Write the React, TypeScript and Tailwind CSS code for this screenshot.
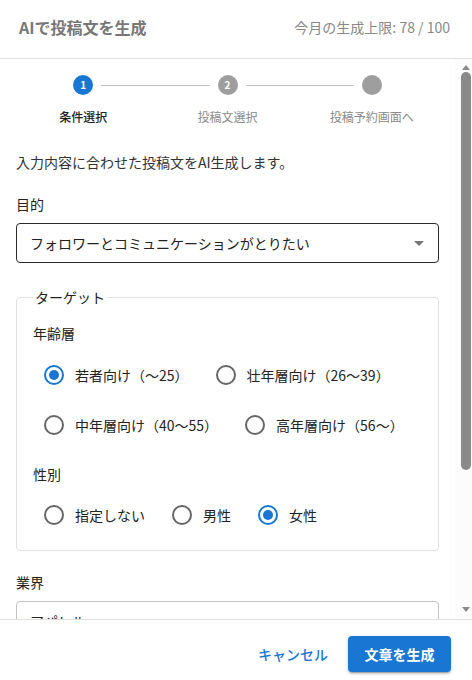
import { ReactNode } from 'react';

const font = "font-['Noto_Sans_CJK_JP','Noto_Sans',sans-serif]";

function ArrowDrop() {
  return (
    <svg width="24" height="24" viewBox="0 0 24 24" className="shrink-0">
      <path d="M7 10l5 5 5-5z" fill="#757575" />
    </svg>
  );
}

function SelectBox({ value, active }: { value: string; active?: boolean }) {
  return (
    <div
      className={`flex h-[40px] items-center justify-between rounded-[4px] border pl-[13px] pr-[7px] ${
        active ? 'border-[#2a2a2a]' : 'border-[#c4c4c4]'
      }`}
    >
      <span className="text-[14px] leading-[20px] text-[#222]">{value}</span>
      <ArrowDrop />
    </div>
  );
}

function Radio({ label, checked }: { label: string; checked?: boolean }) {
  return (
    <label className="mr-[16px] flex h-[42px] items-center">
      <span className="flex p-[9px]">
        <span className="flex h-6 w-6 items-center justify-center">
          <span
            className={`flex h-[20px] w-[20px] items-center justify-center rounded-full border-2 ${
              checked ? 'border-[#1976d2]' : 'border-[#666]'
            }`}
          >
            {checked && <span className="h-[10px] w-[10px] rounded-full bg-[#1976d2]" />}
          </span>
        </span>
      </span>
      <span className="text-[14px] leading-[20px] text-[#222]">{label}</span>
    </label>
  );
}

function FieldLabel({ children, className = '' }: { children: ReactNode; className?: string }) {
  return <div className={`text-[14px] leading-[20px] text-[#222] ${className}`}>{children}</div>;
}

// drawn scrollbar (the headless browser hides native ones)
function ScrollBar() {
  return (
    <div className="flex w-[17px] shrink-0 flex-col items-end bg-[#fcfcfc] pr-px">
      <div className="flex h-[13px] w-[10px] items-end justify-center pb-[2px]">
        <svg width="8" height="5" viewBox="0 0 8 5">
          <path d="M0 5L4 0L8 5Z" fill="#8a8a8a" />
        </svg>
      </div>
      <div className="h-[398px] w-[10px] rounded-full bg-[#8a8a8a]" />
      <div className="flex-1" />
      <div className="flex h-[14px] w-[10px] items-start justify-center pt-[2px]">
        <svg width="8" height="5" viewBox="0 0 8 5">
          <path d="M0 0L8 0L4 5Z" fill="#8a8a8a" />
        </svg>
      </div>
    </div>
  );
}

const steps = [
  { label: '条件選択', num: '1', active: true },
  { label: '投稿文選択', num: '2', active: false },
  { label: '投稿予約画面へ', num: '', active: false },
];

export default function App() {
  return (
    <div className={`flex h-[680px] w-[472px] flex-col bg-white ${font}`}>
      {/* header */}
      <div className="flex h-[59px] shrink-0 items-center justify-between border-b border-[#e0e0e0] pb-[4px] pl-[19px] pr-[22px]">
        <h2 className="text-[16px] font-bold leading-[24px] text-[#777]">AIで投稿文を生成</h2>
        <span className="text-[14px] leading-[20px] text-[#888]">今月の生成上限: 78 / 100</span>
      </div>

      {/* body */}
      <div className="flex min-h-0 flex-1">
        <div className="min-w-0 flex-1 overflow-hidden">
          <div className="grid grid-cols-3 px-[11px] pt-[16px]">
            {steps.map((s, i) => (
              <div key={s.label} className="flex flex-col items-center">
                <div className="flex w-full items-center">
                  <span className={`h-px flex-1 ${i === 0 ? '' : 'bg-[#bdbdbd]'}`} />
                  <span
                    className={`mx-[8px] flex h-[20px] w-[20px] items-center justify-center rounded-full text-[10px] font-bold leading-none text-white ${
                      s.active ? 'bg-[#1976d2]' : 'bg-[#9e9e9e]'
                    }`}
                  >
                    {s.num}
                  </span>
                  <span className={`h-px flex-1 ${i === steps.length - 1 ? '' : 'bg-[#bdbdbd]'}`} />
                </div>
                <span
                  className={`mt-[12px] text-[12px] leading-[20px] ${
                    s.active ? 'font-medium text-[#222]' : 'text-[#8a8a8a]'
                  }`}
                >
                  {s.label}
                </span>
              </div>
            ))}
          </div>

          <div className="px-[16px]">
            <p className="mt-[25px] text-[14px] leading-[20px] text-[#333]">
              入力内容に合わせた投稿文をAI生成します。
            </p>

            <FieldLabel className="mt-[22px]">目的</FieldLabel>
            <div className="mt-[9px]">
              <SelectBox value="フォロワーとコミュニケーションがとりたい" active />
            </div>

            <fieldset className="mt-[24px] rounded-[4px] border border-[#e0e0e0] pb-[14px] pl-[16px] pr-[16px] pt-[16px]">
              <legend className="px-[2px] text-[14px] leading-[20px] text-[#222]">ターゲット</legend>
              <FieldLabel>年齢層</FieldLabel>
              <div className="mt-[11px] flex flex-wrap gap-y-[8px]">
                <Radio label="若者向け（〜25）" checked />
                <Radio label="壮年層向け（26〜39）" />
                <Radio label="中年層向け（40〜55）" />
                <Radio label="高年層向け（56〜）" />
              </div>

              <FieldLabel className="mt-[18px]">性別</FieldLabel>
              <div className="mt-[10px] flex flex-wrap">
                <Radio label="指定しない" />
                <Radio label="男性" />
                <Radio label="女性" checked />
              </div>
            </fieldset>

            <FieldLabel className="mt-[21px]">業界</FieldLabel>
            <div className="mt-[9px]">
              <SelectBox value="アパレル" />
            </div>
          </div>
        </div>
        <ScrollBar />
      </div>

      {/* footer */}
      <div className="flex h-[61px] shrink-0 items-start justify-end gap-[12px] border-t border-[#e0e0e0] pr-[21px] pt-[16px]">
        <button className="flex h-[36px] items-center rounded-[4px] px-[8px] text-[14px] font-medium text-[#1976d2]">
          キャンセル
        </button>
        <button className="flex h-[36px] w-[103px] items-center justify-center rounded-[4px] bg-[#1976d2] text-[14px] font-bold text-white shadow-[0_3px_1px_-2px_rgba(0,0,0,0.2),0_2px_2px_0_rgba(0,0,0,0.14),0_1px_5px_0_rgba(0,0,0,0.12)]">
          文章を生成
        </button>
      </div>
    </div>
  );
}
